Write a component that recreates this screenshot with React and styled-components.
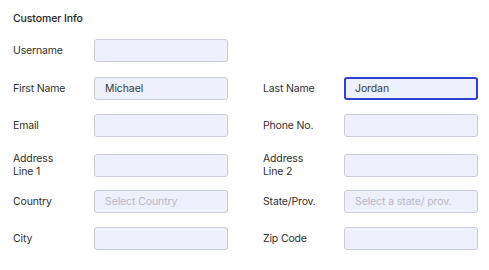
import React from 'react';
import styled, {createGlobalStyle} from "styled-components";

const GlobalStyle = createGlobalStyle`
  html, body {
    margin: 0;
    padding: 0;
    background: #ffffff;
  }
  body {
    font-family: Inter, "Liberation Sans", Arial, sans-serif;
  }
`;

const Panel = styled.div`
  padding: 12px 12px 0 13px;
  width: 489px;
  box-sizing: border-box;
`;

const Title = styled.h3`
  margin: 0 0 13px 0;
  font-size: 10.5px;
  line-height: 14px;
  font-weight: 500;
  letter-spacing: -0.1px;
  color: #262626;
`;

const FormGrid = styled.div`
  display: grid;
  grid-template-columns: 215px 215px;
  grid-auto-rows: 23px;
  column-gap: 35px;
  row-gap: 14.7px;
`;

const Field = styled.label`
  display: grid;
  grid-template-columns: 81px 134px;
  height: 23px;
  align-items: center;
`;

const LabelText = styled.span`
  font-size: 10.5px;
  line-height: 13px;
  letter-spacing: -0.15px;
  color: #2f2f2f;
`;

const TextInput = styled.input`
  box-sizing: border-box;
  width: 134px;
  height: 23px;
  margin: 0;
  padding: 0 0 0 ${props => (props.focused ? '9px' : '10px')};
  font-family: Inter, "Liberation Sans", Arial, sans-serif;
  font-size: 10.5px;
  letter-spacing: -0.1px;
  color: #3a3a3a;
  background: #eef0fb;
  border: ${props => (props.focused ? '2px solid #2f3fcf' : '1px solid #c9ccd9')};
  border-radius: 3px;
  outline: none;

  &::placeholder {
    color: #b6b9cc;
  }
`;

const Blank = styled.div``;

const fields = [
    {label: 'Username'},
    null,
    {label: 'First Name', value: 'Michael'},
    {label: 'Last Name', value: 'Jordan', focused: true},
    {label: 'Email'},
    {label: 'Phone No.'},
    {label: ['Address', 'Line 1']},
    {label: ['Address', 'Line 2']},
    {label: 'Country', placeholder: 'Select Country'},
    {label: 'State/Prov.', placeholder: 'Select a state/ prov.'},
    {label: 'City'},
    {label: 'Zip Code'},
];

export default function App() {
    return (
        <>
            <GlobalStyle/>
            <Panel>
                <Title>Customer Info</Title>
                <FormGrid>
                    {fields.map((f, i) => {
                        if (!f) return <Blank key={i}/>;
                        return (
                            <Field key={i}>
                                <LabelText>
                                    {Array.isArray(f.label)
                                        ? <>{f.label[0]}<br/>{f.label[1]}</>
                                        : f.label}
                                </LabelText>
                                <TextInput
                                    type="text"
                                    defaultValue={f.value}
                                    placeholder={f.placeholder}
                                    focused={f.focused ? 1 : 0}
                                />
                            </Field>
                        );
                    })}
                </FormGrid>
            </Panel>
        </>
    );
}
